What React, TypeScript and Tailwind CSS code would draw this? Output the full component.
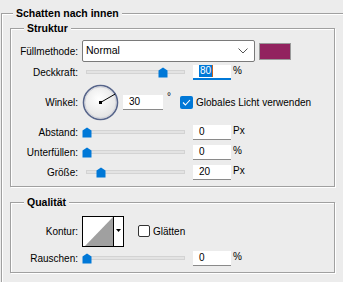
import React from "react";

// Photoshop layer style panel: "Schatten nach innen"

const Thumb = () => (
  <svg width="10" height="11" viewBox="0 0 10 11" className="block">
    <path d="M0.5 3.5 L5 0.5 L9.5 3.5 V10.5 H0.5 Z" fill="#0078d7" />
  </svg>
);

function Slider({ at }: { at: number }) {
  return (
    <div className="relative w-[103px] h-[11px] flex items-center shrink-0">
      <div className="ml-[4px] w-[99px] h-[4px] bg-[#e3e3e3] border border-[#d3d3d3]" />
      <div className="absolute top-0" style={{ left: at }}>
        <Thumb />
      </div>
    </div>
  );
}

function Field({ value, focus, w = 38 }: { value: string; focus?: boolean; w?: number }) {
  return (
    <div
      className={`h-[15px] bg-white flex items-center pl-[6px] shrink-0 ${
        focus ? "border-b-2 border-[#0078d7]" : "border-b border-[#8a8a8a]"
      }`}
      style={{ width: w }}
    >
      {focus ? (
        <span className="flex items-center">
          <span className="bg-[#0078d7] text-white leading-[12px] px-[1px]">{value}</span>
          <span className="w-[1px] h-[12px] bg-[#c8621e]" />
        </span>
      ) : (
        <span className="leading-[12px]">{value}</span>
      )}
    </div>
  );
}

function Unit({ children }: { children: React.ReactNode }) {
  return <span className="ml-[2px] self-start leading-[11px]">{children}</span>;
}

function Label({ children }: { children: React.ReactNode }) {
  return <div className="text-right whitespace-nowrap">{children}</div>;
}

function SliderRow({ label, at, value, unit }: { label: string; at: number; value: string; unit: string }) {
  return (
    <>
      <Label>{label}</Label>
      <div className="flex items-center h-[20px]">
        <Slider at={at} />
        <div className="ml-[8px] flex items-center">
          <Field value={value} />
          <Unit>{unit}</Unit>
        </div>
      </div>
    </>
  );
}

const Dial = () => (
  <svg width="37" height="37" viewBox="0 0 37 37" className="block shrink-0">
    <defs>
      <radialGradient id="dialFill" cx="45%" cy="40%" r="60%">
        <stop offset="0%" stopColor="#ffffff" />
        <stop offset="100%" stopColor="#e2e2e2" />
      </radialGradient>
    </defs>
    <circle cx="18.5" cy="18.5" r="17" fill="url(#dialFill)" stroke="#56648a" strokeWidth="1.6" />
    <circle cx="18.5" cy="18.5" r="15.6" fill="none" stroke="#c9ccd6" strokeWidth="0.8" />
    <line x1="18.5" y1="18.5" x2="33.2" y2="10" stroke="#000" strokeWidth="1" />
    <rect x="17" y="17" width="3" height="3" fill="#000" />
  </svg>
);

const Check = ({ on }: { on?: boolean }) =>
  on ? (
    <div className="w-[13px] h-[13px] rounded-[2px] bg-[#0078d7] flex items-center justify-center shrink-0">
      <svg width="9" height="7" viewBox="0 0 9 7">
        <path d="M1 3.5 L3.4 6 L8 1" fill="none" stroke="#fff" strokeWidth="1.1" />
      </svg>
    </div>
  ) : (
    <div className="w-[12px] h-[12px] rounded-[2px] border border-[#333] bg-white shrink-0" />
  );

const Kontur = () => (
  <svg width="42" height="31" viewBox="0 0 42 31" className="block shrink-0">
    <rect x="0.5" y="0.5" width="41" height="30" fill="#fff" stroke="#000" />
    <polygon points="3,30 31,1 31,30" fill="#a0a0a0" />
    <line x1="31.5" y1="0" x2="31.5" y2="31" stroke="#000" />
    <polygon points="34,13 39,13 36.5,16" fill="#000" />
  </svg>
);

const etched = "border border-[#a0a0a0] shadow-[1px_1px_0_#fff,inset_1px_1px_0_#fff]";

export default function App() {
  return (
    <div className="w-[343px] h-[282px] overflow-hidden bg-[#ececec] text-[10px] text-black font-['Liberation_Sans',Arial,sans-serif]">
      <fieldset className={`${etched} border-r-0 border-b-0 ml-[1px] mt-[7px] w-[360px] pl-[8px] pt-[3px] pb-[20px]`}>
        <legend className="ml-[3px] px-[3px] font-bold text-[10.5px] leading-[12px] bg-[#ececec]">
          Schatten nach innen
        </legend>

        {/* Struktur */}
        <fieldset className={`${etched} w-[325px] pt-[6px] pb-[4px]`}>
          <legend className="ml-[13px] px-[3px] font-bold text-[10.5px] leading-[12px] bg-[#ececec]">Struktur</legend>
          <div className="grid grid-cols-[67px_1fr] gap-x-[4px] items-center">
            <Label>Füllmethode:</Label>
            <div className="flex items-center h-[22px]">
              <div className="w-[173px] h-[22px] bg-white border border-[#7a7a7a] rounded-[2px] flex items-center justify-between pl-[3px] pr-[6px] text-[10.5px]">
                <span>Normal</span>
                <svg width="10" height="6" viewBox="0 0 10 6">
                  <path d="M0.5 0.5 L5 5 L9.5 0.5" fill="none" stroke="#555" strokeWidth="1" />
                </svg>
              </div>
              <div className="ml-[4px] w-[32px] h-[17px] bg-[#92235f] border border-[#9a9a9a]" />
            </div>

            <Label>Deckkraft:</Label>
            <div className="flex items-center h-[20px]">
              <Slider at={76} />
              <div className="ml-[8px] flex items-center">
                <Field value="80" focus />
                <Unit>%</Unit>
              </div>
            </div>

            <Label>Winkel:</Label>
            <div className="flex items-center h-[40px]">
              <Dial />
              <div className="ml-[4px] flex items-center">
                <Field value="30" w={40} />
              </div>
              <span className="w-[17px] pl-[4px] self-start mt-[10px] leading-[10px]">°</span>
              <Check on />
              <span className="ml-[3px] whitespace-nowrap">Globales Licht verwenden</span>
            </div>

            <SliderRow label="Abstand:" at={0} value="0" unit="Px" />
            <SliderRow label="Unterfüllen:" at={0} value="0" unit="%" />
            <SliderRow label="Größe:" at={14} value="20" unit="Px" />
          </div>
        </fieldset>

        {/* Qualität */}
        <fieldset className={`${etched} w-[325px] mt-[9px] pt-[6px] pb-[4px]`}>
          <legend className="ml-[13px] px-[3px] font-bold text-[10.5px] leading-[12px] bg-[#ececec]">Qualität</legend>
          <div className="grid grid-cols-[67px_1fr] gap-x-[4px] items-center">
            <Label>Kontur:</Label>
            <div className="flex items-center h-[34px]">
              <Kontur />
              <div className="ml-[14px]">
                <Check />
              </div>
              <span className="ml-[3px]">Glätten</span>
            </div>

            <SliderRow label="Rauschen:" at={0} value="0" unit="%" />
          </div>
        </fieldset>
      </fieldset>
    </div>
  );
}
